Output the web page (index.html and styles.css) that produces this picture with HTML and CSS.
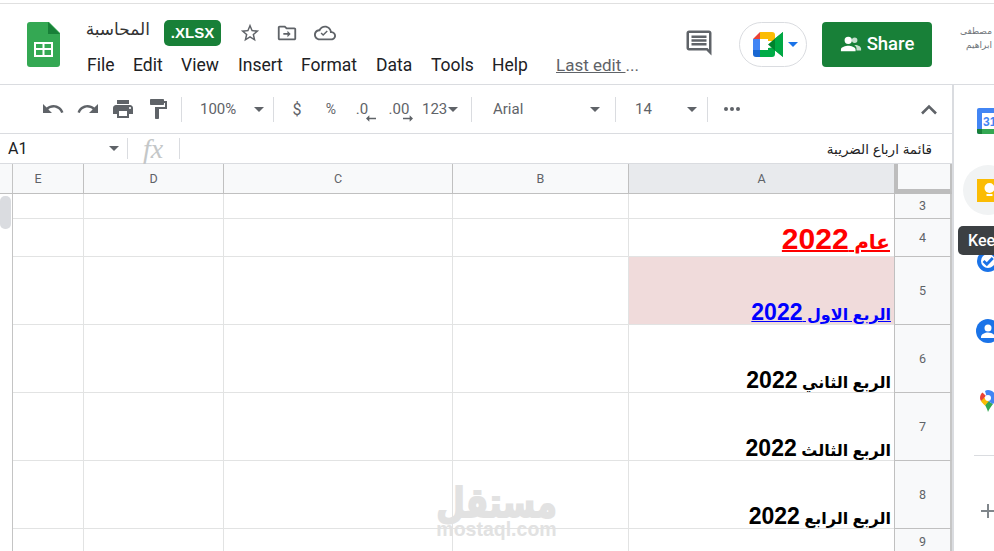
FILE: index.html
```html
<!DOCTYPE html>
<html lang="en">
<head>
<meta charset="utf-8">
<title>المحاسبة</title>
<link rel="stylesheet" href="styles.css">
</head>
<body>
<div class="page">
  <header class="header">
    <svg class="sheets-logo" viewBox="0 0 33 45" width="33" height="45"><path fill="#34a853" d="M3 0h19l11 11v31a3 3 0 0 1-3 3H3a3 3 0 0 1-3-3V3a3 3 0 0 1 3-3z"/><path fill="#188038" d="M21 0l12 12H21z"/><path fill="#fff" d="M7 20h19v15H7zm2 2v4h6.500v-4zm8.500 0v4H24v-4zM9 28v5h6.500v-5zm8.500 0v5H24v-5z" fill-rule="evenodd"/></svg>
    <div class="doc">
      <div class="doc-top">
        <span class="doc-title" dir="rtl">المحاسبة</span>
        <span class="badge">.XLSX</span>
        <svg class="ic star" viewBox="0 0 24 24"><path d="M22 9.240l-7.190-.620L12 2 9.190 8.630 2 9.240l5.460 4.730L5.820 21 12 17.270 18.180 21l-1.630-7.030L22 9.240zM12 15.400l-3.760 2.270 1-4.280-3.320-2.880 4.380-.380L12 6.100l1.710 4.040 4.380.380-3.320 2.880 1 4.280L12 15.400z"/></svg>
        <svg class="ic move" viewBox="0 0 24 24"><path d="M20 6h-8l-2-2H4c-1.100 0-2 .900-2 2v12c0 1.100.900 2 2 2h16c1.100 0 2-.900 2-2V8c0-1.100-.900-2-2-2zm0 12H4V6h5.170l2 2H20v10zM12.500 9.500l3.500 3.500-3.500 3.500V14H8v-2h4.500z"/></svg>
        <svg class="ic cloud" viewBox="0 0 24 24"><path d="M19.350 10.040C18.670 6.590 15.640 4 12 4 9.110 4 6.600 5.640 5.350 8.040 2.340 8.360 0 10.910 0 14c0 3.310 2.690 6 6 6h13c2.760 0 5-2.240 5-5 0-2.640-2.050-4.780-4.650-4.960zM19 18H6c-2.210 0-4-1.790-4-4s1.790-4 4-4h.710C7.370 7.690 9.480 6 12 6c3.040 0 5.500 2.460 5.500 5.500v.500H19c1.660 0 3 1.340 3 3s-1.340 3-3 3zM10 13.200l-1.700-1.700-1.100 1.100 2.800 2.800 5-5-1.100-1.100z"/></svg>
      </div>
      <nav class="menu">
        <span class="m-file">File</span><span class="m-edit">Edit</span><span class="m-view">View</span><span class="m-insert">Insert</span><span class="m-format">Format</span><span class="m-data">Data</span><span class="m-tools">Tools</span><span class="m-help">Help</span>
        <span class="last-edit"><u>Last edit </u>...</span>
      </nav>
    </div>
    <svg class="ic comment" viewBox="0 0 24 24"><path d="M21.990 4c0-1.100-.890-2-1.990-2H4c-1.100 0-2 .900-2 2v12c0 1.100.900 2 2 2h14l4 4-.010-18zM20 4v13.170L18.830 16H4V4h16zM6 12h12v2H6zm0-3h12v2H6zm0-3h12v2H6z"/></svg>
    <div class="meet">
      <svg viewBox="0 0 30 25" width="30" height="25"><path fill="#ea4335" d="M7 0v7H0z"/><path fill="#4285f4" d="M0 7h7v11H0z"/><path fill="#1967d2" d="M0 18h7v7H3a3 3 0 0 1-3-3z"/><path fill="#fbbc04" d="M7 0h12a3 3 0 0 1 3 3v6h-7V7H7z"/><path fill="#00ac47" d="M7 18h8v-2l7-1v7a3 3 0 0 1-3 3H7z"/><path fill="#00832d" d="M15 12.500l7-6 8-6.500v25l-8-6.500z"/><path fill="#00ac47" d="M22 6.500l8-6.500v25l-8-6.500z" opacity=".9"/></svg>
      <span class="meet-caret"></span>
    </div>
    <button class="share">
      <svg viewBox="0 0 24 24" width="22" height="22"><path fill="#fff" opacity=".75" d="M16 11a3 3 0 1 0 0-6 3 3 0 0 0 0 6zm1 2h-1.500c1.700 1 2.500 2.400 2.500 4v2h5v-2c0-2.200-3.500-4-6-4z"/><path fill="#fff" d="M9 12a4 4 0 1 0 0-8 4 4 0 0 0 0 8zm0 2c-2.700 0-8 1.300-8 4v2h16v-2c0-2.700-5.300-4-8-4z"/></svg>
      Share
    </button>
    <div class="avatar" dir="rtl"><span>مصطفى</span><span>ابراهيم</span></div>
  </header>

  <div class="body">
    <main class="sheet">
      <div class="toolbar">
        <button class="tb"><svg class="ic" viewBox="0 0 24 24"><path d="M12.500 8c-2.650 0-5.050.990-6.900 2.600L2 7v9h9l-3.620-3.620c1.390-1.160 3.160-1.880 5.120-1.880 3.540 0 6.550 2.310 7.600 5.500l2.370-.780C21.080 11.030 17.150 8 12.500 8z"/></svg></button>
        <button class="tb"><svg class="ic" viewBox="0 0 24 24"><path d="M18.400 10.600C16.550 8.990 14.150 8 11.500 8c-4.650 0-8.580 3.030-9.960 7.220L3.900 16c1.050-3.190 4.050-5.500 7.600-5.500 1.950 0 3.730.720 5.120 1.880L13 16h9V7l-3.600 3.600z"/></svg></button>
        <button class="tb"><svg class="ic" viewBox="0 0 24 24"><path d="M19 8H5c-1.660 0-3 1.340-3 3v6h4v4h12v-4h4v-6c0-1.660-1.340-3-3-3zm-3 11H8v-5h8v5zm3-7c-.550 0-1-.450-1-1s.450-1 1-1 1 .450 1 1-.450 1-1 1zm-1-9H6v4h12V3z"/></svg></button>
        <button class="tb"><svg class="ic" viewBox="0 0 24 24"><path d="M18 4V3c0-.550-.450-1-1-1H5c-.550 0-1 .450-1 1v4c0 .550.450 1 1 1h12c.550 0 1-.450 1-1V6h1v4H9v11c0 .550.450 1 1 1h2c.550 0 1-.450 1-1v-9h8V4h-3z"/></svg></button>
        <i class="sep sep-1"></i>
        <div class="drop zoom"><span>100%</span><b class="caret"></b></div>
        <i class="sep"></i>
        <button class="tb fmt dollar">$</button>
        <button class="tb fmt pct">%</button>
        <button class="tb fmt dec dec-less"><span>.0</span><svg viewBox="0 0 12 8" class="arrow"><path d="M0 4l4-4v3h8v2H4v3z"/></svg></button>
        <button class="tb fmt dec dec-more"><span>.00</span><svg viewBox="0 0 12 8" class="arrow"><path d="M12 4L8 0v3H0v2h8v3z"/></svg></button>
        <div class="drop num"><span>123</span><b class="caret"></b></div>
        <i class="sep"></i>
        <div class="drop font"><span>Arial</span><b class="caret"></b></div>
        <i class="sep"></i>
        <div class="drop size"><span>14</span><b class="caret"></b></div>
        <i class="sep"></i>
        <span class="more"><i></i><i></i><i></i></span>
        <svg class="chevron" viewBox="0 0 18 12" width="18" height="12"><path d="M2 10.500l7-7 7 7" fill="none" stroke="#5f6368" stroke-width="2.600"/></svg>
      </div>

      <div class="formula">
        <span class="ref">A1</span><b class="caret ref-caret"></b>
        <i class="fsep"></i>
        <span class="fx">fx</span>
        <i class="fsep"></i>
        <span class="fvalue" dir="rtl">قائمة ارباع الضريبة</span>
      </div>

      <div class="grid">
        <div class="row head">
          <div class="c gut"></div><div class="c e">E</div><div class="c d">D</div><div class="c cc">C</div><div class="c b">B</div><div class="c a sel">A</div><div class="c corner"></div>
        </div>
        <div class="row r3">
          <div class="c gut"></div><div class="c"></div><div class="c"></div><div class="c"></div><div class="c"></div><div class="c"></div><div class="c num-cell">3</div>
        </div>
        <div class="row r4">
          <div class="c gut"></div><div class="c"></div><div class="c"></div><div class="c"></div><div class="c"></div><div class="c txt title-cell" dir="rtl"><u>عام <span class="yr">2022</span></u></div><div class="c num-cell">4</div>
        </div>
        <div class="row tall">
          <div class="c gut"></div><div class="c"></div><div class="c"></div><div class="c"></div><div class="c"></div><div class="c txt link-cell" dir="rtl"><u>الربع الاول <span class="yr">2022</span></u></div><div class="c num-cell">5</div>
        </div>
        <div class="row tall">
          <div class="c gut"></div><div class="c"></div><div class="c"></div><div class="c"></div><div class="c"></div><div class="c txt" dir="rtl"><span>الربع الثاني <span class="yr">2022</span></span></div><div class="c num-cell">6</div>
        </div>
        <div class="row tall">
          <div class="c gut"></div><div class="c"></div><div class="c"></div><div class="c"></div><div class="c"></div><div class="c txt" dir="rtl"><span>الربع الثالث <span class="yr">2022</span></span></div><div class="c num-cell">7</div>
        </div>
        <div class="row tall">
          <div class="c gut"></div><div class="c"></div><div class="c"></div><div class="c"></div><div class="c"></div><div class="c txt" dir="rtl"><span>الربع الرابع <span class="yr">2022</span></span></div><div class="c num-cell">8</div>
        </div>
        <div class="row r9">
          <div class="c gut"></div><div class="c"></div><div class="c"></div><div class="c"></div><div class="c"></div><div class="c"></div><div class="c num-cell">9</div>
        </div>
        <div class="thumb"></div>
        <div class="watermark"><span class="wm-ar" dir="rtl">مستقل</span><span class="wm-en">mostaql.com</span></div>
      </div>
    </main>

    <aside class="side">
      <svg class="s-cal" viewBox="0 0 26 26" width="26" height="26"><path fill="#4285f4" d="M2 0h24v26H2a2 2 0 0 1-2-2V2a2 2 0 0 1 2-2z"/><path fill="#fff" d="M5 5h21v16H5z"/><path fill="#34a853" d="M5 21h21v5H5z"/><path fill="#188038" d="M0 21h5v5H2a2 2 0 0 1-2-2z"/><text x="6" y="18" class="s-cal-t">31</text></svg>
      <div class="s-keep"><svg viewBox="0 0 26 23" width="26" height="23"><path fill="#fbbc04" d="M0 0h26v23H0z"/><circle cx="12.500" cy="9" r="5" fill="#fff"/><path fill="#fff" d="M9.500 15h6v2h-6z"/></svg></div>
      <svg class="s-tasks" viewBox="0 0 22 22" width="22" height="22"><circle cx="11" cy="11" r="9" fill="#fff" stroke="#1a73e8" stroke-width="4"/><path d="M6.500 11l3.300 3.300 6-6.300" fill="none" stroke="#1a73e8" stroke-width="2.800"/></svg>
      <svg class="s-contacts" viewBox="0 0 24 24" width="24" height="24"><circle cx="12" cy="12" r="12" fill="#1a73e8"/><circle cx="12" cy="9" r="3.500" fill="#fff"/><path fill="#fff" d="M5 18c0-3 4-4.500 7-4.500s7 1.500 7 4.500v1H5z"/></svg>
      <svg class="s-maps" viewBox="0 0 16 22" width="16" height="22"><path fill="#34a853" d="M8 22c1-3 3-5 5-8L8 11l-3 4c1 2 2.400 4 3 7z"/><path fill="#fbbc04" d="M1 11c.8 1.500 2.500 3 4 4.500L9 11 3 7z"/><path fill="#ea4335" d="M2.500 2.500C1 3.800 0 5.700 0 8c0 1 .4 2 1 3l5-5z"/><path fill="#4285f4" d="M5 1c1-.600 2-1 3-1 4.400 0 8 3.600 8 8 0 2.300-1.500 4-3 6L8 11z"/><circle cx="8" cy="8" r="3" fill="#fff"/></svg>
      <i class="s-div"></i>
      <svg class="s-plus" viewBox="0 0 14 14" width="14" height="14"><path d="M6 0h2v6h6v2H8v6H6V8H0V6h6z" fill="#80868b"/></svg>
      <div class="tooltip">Keep</div>
    </aside>
  </div>
</div>
</body>
</html>
```
FILE: styles.css
```css
* { box-sizing: border-box; }
html, body { margin: 0; height: 100%; overflow: hidden; background: #fff; }
body { font-family: Roboto, "Liberation Sans", "DejaVu Sans", sans-serif; color: #202124; }
button { font: inherit; border: 0; background: none; padding: 0; color: inherit; }
i, b { font-style: normal; font-weight: normal; }

.page { width: 994px; height: 551px; display: flex; flex-direction: column; overflow: hidden; }
.ic { width: 24px; height: 24px; fill: #5f6368; flex: none; }

/* header */
.header { flex: none; display: flex; align-items: flex-start; border-top: 1px solid #e0e0e0; border-bottom: 1px solid #dadce0; margin-top: 3px; height: 82px; position: relative; }
.sheets-logo { margin: 18px 0 0 27px; flex: none; }
.doc { margin-left: 27px; width: 598px; flex: none; }
.doc-top { display: flex; align-items: center; height: 26px; margin-top: 16px; }
.doc-title { width: 63px; font-size: 17px; line-height: 26px; font-family: "Liberation Sans", "DejaVu Sans", sans-serif; white-space: nowrap; flex: none; text-align: right; color: #333; margin-top: -7px; }
.badge { margin-left: 14px; width: 57px; height: 26px; background: #188038; color: #fff; border-radius: 5px; font: bold 15px/26px "Liberation Sans", sans-serif; text-align: center; flex: none; }
.star { margin-left: 18px; width: 22px; height: 22px; }
.move { margin-left: 15px; width: 22px; height: 22px; }
.cloud { margin-left: 16px; width: 22px; height: 22px; }
.menu { display: flex; font-size: 17.500px; line-height: 22px; margin-top: 8px; white-space: nowrap; }
.menu span { flex: none; }
.m-file { width: 46px; } .m-edit { width: 48px; } .m-view { width: 57px; } .m-insert { width: 63px; }
.m-format { width: 75px; } .m-data { width: 55px; } .m-tools { width: 61px; } .m-help { width: 64px; }
.menu .last-edit { color: #5f6368; font-size: 17px; }
.comment { margin: 24px 0 0 -1px; width: 30px; height: 30px; }
.meet { width: 68px; height: 45px; margin: 18px 0 0 25px; border: 1px solid #dadce0; border-radius: 23px; display: flex; align-items: center; padding-left: 13px; flex: none; }
.meet-caret { width: 0; height: 0; border: 5px solid transparent; border-top: 5px solid #1a73e8; border-bottom: 0; margin-left: 5px; }
.share { width: 110px; height: 45px; margin: 18px 0 0 15px; padding-bottom: 2px; background: #188038; color: #fff; border-radius: 4px; font-size: 18.500px; font-weight: 500; display: flex; align-items: center; justify-content: center; gap: 5px; flex: none; }
.avatar { width: 62px; padding-right: 2px; display: flex; flex-direction: column; font: 9px/14px "Liberation Sans", "DejaVu Sans", sans-serif; color: #70757a; margin-top: 20px; flex: none; }

/* body */
.body { flex: 1; display: flex; min-height: 0; }
.sheet { width: 952px; flex: none; display: flex; flex-direction: column; min-height: 0; }

/* toolbar */
.toolbar { height: 49px; flex: none; display: flex; align-items: center; padding-left: 35px; border-bottom: 1px solid #dadce0; color: #5f6368; }
.tb { width: 35px; height: 30px; display: flex; align-items: center; justify-content: center; flex: none; }
.sep { width: 1px; height: 25px; background: #dadce0; flex: none; }
.sep-1 { margin-left: 6px; }
.caret { width: 0; height: 0; border: 5px solid transparent; border-top: 5px solid #5f6368; border-bottom: 0; flex: none; }
.drop { display: flex; align-items: center; justify-content: space-between; font-size: 15px; flex: none; color: #5f6368; }
.zoom { width: 91px; padding: 0 9px 0 18px; }
.fmt { width: 34px; font-size: 15px; position: relative; color: #5f6368; }
.dollar { margin-left: 6px; font-size: 16px; }
.pct { font-size: 14px; }
.dec-less span { margin-right: 6px; }
.arrow { position: absolute; width: 10px; height: 7px; fill: #5f6368; bottom: 2px; }
.dec-less .arrow { left: 18px; }
.dec-more .arrow { left: 21px; }
.num { width: 49px; justify-content: flex-start; gap: 1px; margin-right: 6px; padding-left: 6px; }
.font { width: 143px; padding: 0 15px 0 21px; }
.size { width: 91px; padding: 0 10px 0 19px; }
.more { display: flex; gap: 2px; margin-left: 16px; }
.more i { width: 4px; height: 4px; border-radius: 50%; background: #5f6368; }
.chevron { margin-left: auto; margin-right: 14px; }

/* formula bar */
.formula { height: 30px; flex: none; display: flex; align-items: center; border-bottom: 1px solid #dadce0; padding-left: 8px; padding-right: 20px; }
.ref { width: 101px; font-size: 16px; }
.ref-caret { margin-right: 8px; }
.fsep { width: 1px; height: 21px; background: #dadce0; flex: none; }
.fx { width: 51px; font: italic 28px/1 "Liberation Serif", serif; color: #c4c7c8; padding-left: 15px; }
.fvalue { flex: 1; font: 13.500px "Liberation Sans", "DejaVu Sans", sans-serif; color: #222; }

/* grid */
.grid { flex: 1; min-height: 0; position: relative; overflow: hidden; }
.row { display: grid; grid-template-columns: 13px 71px 140px 229px 176px 266px 57px; }
.c { border-right: 1px solid #e2e3e3; border-bottom: 1px solid #e2e3e3; min-width: 0; }
.head { height: 30px; }
.head .c { background: #f8f9fa; border-color: #c0c0c0; display: flex; align-items: center; justify-content: center; font-size: 12.500px; color: #5f6368; }
.head .e { padding-right: 20px; }
.head .sel { background: #e8eaed; }
.head .corner { background: #f8f9fa; border-left: 4px solid #bdbdbd; border-bottom: 5px solid #bdbdbd; border-right: 2px solid #c0c0c0; margin-left: -1px; }
.gut, .head .gut { background: #fff; border-right: 1px solid #c4c4c4; border-bottom: 0; }
.head .gut { background: #f8f9fa; border-bottom: 1px solid #c0c0c0; }
.r3 { height: 25px; }
.r3 .num-cell { padding-bottom: 2px; }
.r4 { height: 38px; }
.tall { height: 68px; }
.r9 { height: 25px; }
.num-cell { background: #f8f9fa; border-color: #c0c0c0; border-right: 2px solid #c6c6c6; border-left: 1px solid #c0c0c0; margin-left: -1px; display: flex; align-items: center; justify-content: center; font-size: 12.500px; color: #5f6368; }
.txt { display: flex; align-items: flex-end; justify-content: flex-start; padding: 0 3px 0 0; font: bold 16px/1 "Liberation Sans", "DejaVu Sans", sans-serif; color: #000; white-space: nowrap; overflow: hidden; }
.yr { font-size: 23px; }
.title-cell { color: #f00; font-size: 20px; padding-right: 4px; padding-bottom: 2px; }
.title-cell .yr { font-size: 30px; }
.link-cell { color: #00f; background: #f0dbdb; }

.thumb { position: absolute; left: 0; top: 32px; width: 11px; height: 33px; background: #dadce0; border-radius: 5px; }
.watermark { position: absolute; left: 434px; top: 322px; width: 125px; display: flex; flex-direction: column; align-items: center; color: #e2e2e2; pointer-events: none; }
.wm-ar { font: bold 33px/34px "DejaVu Sans", sans-serif; transform: scaleY(1.25); -webkit-text-stroke: 1.500px #e2e2e2; }
.wm-en { font: bold 19.500px/18px "Liberation Sans", sans-serif; }

/* side panel */
.side { flex: 1; border-left: 2px solid #dadce0; position: relative; display: flex; flex-direction: column; align-items: flex-start; padding-left: 23px; overflow: hidden; }
.s-cal { margin-top: 23px; flex: none; }
.s-cal-t { font: bold 12px "Liberation Sans", sans-serif; fill: #4285f4; }
.s-keep { width: 50px; height: 50px; border-radius: 50%; background: #f1f3f4; margin: 31px 0 0 -14px; padding: 14px 0 0 14px; flex: none; }
.s-tasks { margin: 35px 0 0 0; flex: none; }
.s-contacts { margin: 47px 0 0 -1px; flex: none; }
.s-maps { margin: 47px 0 0 3px; flex: none; }
.s-div { width: 30px; height: 1px; background: #dadce0; margin: 43px 0 0 -3px; flex: none; }
.s-plus { margin: 48px 0 0 4px; flex: none; }
.tooltip { position: absolute; left: 4px; top: 141px; width: 80px; height: 29px; background: #3c4043; color: #fff; border-radius: 5px; font-size: 16px; font-weight: 500; line-height: 29px; padding-left: 10px; white-space: nowrap; }
```
